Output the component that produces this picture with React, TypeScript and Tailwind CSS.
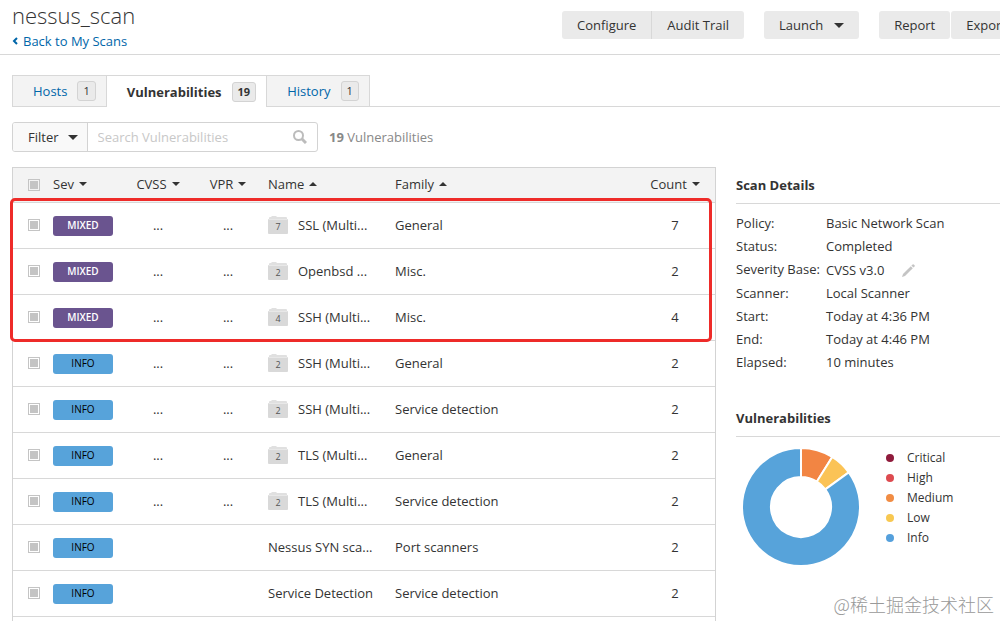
import { clsx } from "clsx";

type Row = {
  sev: "MIXED" | "INFO";
  group?: number;
  name: string;
  family: string;
  count: number;
};

const rows: Row[] = [
  { sev: "MIXED", group: 7, name: "SSL (Multi...", family: "General", count: 7 },
  { sev: "MIXED", group: 2, name: "Openbsd ...", family: "Misc.", count: 2 },
  { sev: "MIXED", group: 4, name: "SSH (Multi...", family: "Misc.", count: 4 },
  { sev: "INFO", group: 2, name: "SSH (Multi...", family: "General", count: 2 },
  { sev: "INFO", group: 2, name: "SSH (Multi...", family: "Service detection", count: 2 },
  { sev: "INFO", group: 2, name: "TLS (Multi...", family: "General", count: 2 },
  { sev: "INFO", group: 2, name: "TLS (Multi...", family: "Service detection", count: 2 },
  { sev: "INFO", name: "Nessus SYN sca...", family: "Port scanners", count: 2 },
  { sev: "INFO", name: "Service Detection", family: "Service detection", count: 2 },
];

const tabs = [
  { label: "Hosts", count: 1 },
  { label: "Vulnerabilities", count: 19, active: true },
  { label: "History", count: 1 },
];

const details = [
  { label: "Policy:", value: "Basic Network Scan" },
  { label: "Status:", value: "Completed" },
  { label: "Severity Base:", value: "CVSS v3.0", editable: true },
  { label: "Scanner:", value: "Local Scanner" },
  { label: "Start:", value: "Today at 4:36 PM" },
  { label: "End:", value: "Today at 4:46 PM" },
  { label: "Elapsed:", value: "10 minutes" },
];

const legend = [
  { label: "Critical", color: "bg-[#8f1b3c]" },
  { label: "High", color: "bg-[#dd4b50]" },
  { label: "Medium", color: "bg-[#f18c43]" },
  { label: "Low", color: "bg-[#f8c851]" },
  { label: "Info", color: "bg-[#55a0dc]" },
];

const slices = [
  { from: 0, to: 32, color: "#f28543" },
  { from: 32, to: 54, color: "#fbc356" },
  { from: 54, to: 360, color: "#57a3da" },
];

const Caret = ({ up = false }: { up?: boolean }) => (
  <svg width="8" height="4" viewBox="0 0 8 4" className="shrink-0" aria-hidden="true">
    <path d={up ? "M0 4L4 0L8 4Z" : "M0 0H8L4 4Z"} fill="#333" />
  </svg>
);

const BigCaret = () => (
  <svg width="10" height="5" viewBox="0 0 10 5" className="shrink-0" aria-hidden="true">
    <path d="M0 0H10L5 5Z" fill="#333" />
  </svg>
);

const Folder = ({ count }: { count: number }) => (
  <span className="relative flex h-[18px] w-5 shrink-0 items-center justify-center">
    <svg width="20" height="18" viewBox="0 0 20 18" className="absolute inset-0" aria-hidden="true">
      <path d="M1 4V2Q1 1 2 1H3L4 0H8L9 1H18Q19 1 19 2V4Z" fill="#e0e0e0" />
      <path d="M0 4Q0 3 1 3H19Q20 3 20 4V17Q20 18 19 18H1Q0 18 0 17Z" fill="#d9d9d9" />
      <path d="M1 3.5H19" stroke="#e8e8e8" />
    </svg>
    <span className="relative pt-1 text-[9px] leading-3 text-[#555]">{count}</span>
  </span>
);

const Checkbox = ({ label }: { label: string }) => (
  <input
    type="checkbox"
    aria-label={label}
    className="block size-3 appearance-none border border-[#c4c4c4] bg-[#c4c4c4] bg-clip-content p-px"
  />
);

const point = (angle: number, radius: number) => {
  const a = (angle * Math.PI) / 180;
  return `${60 + radius * Math.sin(a)} ${60 - radius * Math.cos(a)}`;
};

const Donut = () => (
  <svg width="120" height="120" viewBox="0 0 120 120" role="img" aria-label="Vulnerabilities by severity">
    {slices.map(({ from, to, color }) => {
      const large = to - from > 180 ? 1 : 0;
      return (
        <path
          key={color}
          d={`M${point(from, 59)}A59 59 0 ${large} 1 ${point(to, 59)}L${point(to, 30)}A30 30 0 ${large} 0 ${point(from, 30)}Z`}
          fill={color}
          stroke="#fff"
          strokeWidth="2"
        />
      );
    })}
  </svg>
);

const Header = () => (
  <header className="flex h-[55px] shrink-0 justify-between border-b border-[#d8d8d8] pl-3">
    <div>
      <h1 className="text-[22px] leading-[30px] font-light">nessus_scan</h1>
      <a href="#scans" className="flex items-center gap-1 leading-[22px] text-[#0066a9]">
        <svg width="7" height="8" viewBox="0 0 7 8" fill="none" stroke="currentColor" strokeWidth="2" aria-hidden="true">
          <path d="M5 1L2 4L5 7" />
        </svg>
        Back to My Scans
      </a>
    </div>
    <div className="-mr-[21px] flex shrink-0 gap-5 pt-[11px]">
      <div className="flex h-7">
        <button className="rounded-l-[3px] border-r border-[#d8d8d8] bg-[#eaeaea] px-[15px]">Configure</button>
        <button className="rounded-r-[3px] bg-[#eaeaea] px-[15px]">Audit Trail</button>
      </div>
      <button className="flex h-7 items-center gap-[11px] rounded-[3px] bg-[#eaeaea] px-[15px]">
        Launch
        <BigCaret />
      </button>
      <div className="flex h-7 gap-px">
        <button className="rounded-[3px] bg-[#eaeaea] px-[15px]">Report</button>
        <button className="rounded-[3px] bg-[#eaeaea] px-[15px]">Export</button>
      </div>
    </div>
  </header>
);

const Tabs = () => (
  <div role="tablist" className="mt-5 ml-3 flex h-8 shrink-0">
    {tabs.map(({ label, count, active }) => (
      <button
        key={label}
        role="tab"
        aria-selected={!!active}
        className={clsx(
          "flex items-center gap-[10px] border-t border-[#d8d8d8] pr-[10px] pl-5",
          active ? "font-bold" : "border-x border-b bg-[#f3f3f3] text-[#0066a9]"
        )}
      >
        {label}
        <span className="rounded-[3px] border border-[#d3d3d3] bg-[#eaeaea] px-[5px] text-[11px] leading-[18px] text-[#333]">
          {count}
        </span>
      </button>
    ))}
    <div className="flex-1 border-b border-[#d8d8d8]" />
  </div>
);

const Toolbar = () => (
  <div className="mt-[15px] ml-3 flex h-[30px] shrink-0 items-center">
    <div className="flex h-full w-[306px] overflow-hidden rounded-[3px] border border-[#d3d3d3]">
      <button className="flex items-center gap-[9px] border-r border-[#d3d3d3] bg-[#f9f9f9] pr-[9px] pl-[15px]">
        Filter
        <BigCaret />
      </button>
      <input
        type="search"
        aria-label="Search Vulnerabilities"
        placeholder="Search Vulnerabilities"
        className="min-w-0 flex-1 px-[10px] outline-none placeholder:text-[#c8c8c8]"
      />
      <button aria-label="Search" className="pr-[10px]">
        <svg width="14" height="14" viewBox="0 0 14 14" fill="none" stroke="#bcbcbc" strokeWidth="2" aria-hidden="true">
          <circle cx="5.5" cy="5.5" r="4.5" />
          <path d="M9 9L13 13" strokeWidth="3" />
        </svg>
      </button>
    </div>
    <p className="ml-[11px] text-[#888]">
      <b>19</b> Vulnerabilities
    </p>
  </div>
);

const VulnTable = () => (
  <div className="relative min-w-0 flex-1 border-x border-t border-[#d3d3d3]">
    <table className="w-full table-fixed border-collapse">
      <colgroup>
        <col className="w-[35px]" />
        <col className="w-[75px]" />
        <col className="w-[70px]" />
        <col className="w-[70px]" />
        <col className="w-[127px]" />
        <col />
        <col className="w-20" />
      </colgroup>
      <thead>
        <tr className="h-[34px] border-b border-[#d8d8d8] bg-[#f3f3f3]">
          <th className="pl-[15px]">
            <Checkbox label="Select all" />
          </th>
          <th className="px-[5px] pb-[2px] font-normal">
            <span className="flex items-center gap-[5px]">Sev <Caret /></span>
          </th>
          <th className="pb-[2px] font-normal">
            <span className="flex items-center justify-center gap-[5px]">CVSS <Caret /></span>
          </th>
          <th className="pb-[2px] font-normal">
            <span className="flex items-center justify-center gap-[5px]">VPR <Caret /></span>
          </th>
          <th className="px-[5px] pb-[2px] font-normal">
            <span className="flex items-center gap-[5px]">Name <Caret up /></span>
          </th>
          <th className="px-[5px] pb-[2px] font-normal">
            <span className="flex items-center gap-[5px]">Family <Caret up /></span>
          </th>
          <th className="pb-[2px] font-normal">
            <span className="flex items-center justify-center gap-[5px]">Count <Caret /></span>
          </th>
        </tr>
      </thead>
      <tbody>
        {rows.map(({ sev, group, name, family, count }, i) => (
          <tr key={i} className="h-[46px] border-b border-[#d8d8d8]">
            <td className="pl-[15px]">
              <Checkbox label={`Select ${name}`} />
            </td>
            <td className="px-[5px] pt-[2px]">
              <span
                className={clsx(
                  "block h-5 w-[60px] rounded-[3px] text-center text-[10px] leading-[18px]",
                  sev === "MIXED" ? "bg-[#6a548f] font-semibold text-white" : "bg-[#57a3da] font-medium text-black"
                )}
              >
                {sev}
              </span>
            </td>
            <td className="text-center">{group && "..."}</td>
            <td className="text-center">{group && "..."}</td>
            <td className="px-[5px]">
              <span className="flex items-center gap-[10px] whitespace-nowrap">
                {group && <Folder count={group} />}
                {name}
              </span>
            </td>
            <td className="px-[5px]">{family}</td>
            <td className="text-center">{count}</td>
          </tr>
        ))}
      </tbody>
    </table>
    {/* highlight around the mixed severity rows */}
    <div className="pointer-events-none absolute top-[30px] right-[3px] -left-[3px] h-[144px] rounded-[5px] border-[3px] border-[#ee2b29]" />
  </div>
);

const Sidebar = () => (
  <aside className="w-[264px] shrink-0">
    <h2 className="border-b border-[#d8d8d8] leading-9 font-bold">Scan Details</h2>
    <dl className="mt-2 grid grid-cols-[90px_1fr] leading-[23px]">
      {details.map(({ label, value, editable }) => (
        <div key={label} className="contents">
          <dt className="whitespace-nowrap">{label}</dt>
          <dd className={clsx("flex items-center gap-[18px]", editable && "leading-6")}>
            {value}
            {editable && (
              <button aria-label="Edit severity base">
                <svg width="13" height="13" viewBox="0 0 13 13" fill="#c4c4c4" aria-hidden="true">
                  <path d="M0 13L1 10L8.8 2.2L10.8 4.2L3 12Z" />
                  <path d="M9.4 1.6L10.6 0.4Q11.2 0 11.7 0.4L12.6 1.3Q13 1.8 12.6 2.4L11.4 3.6Z" />
                </svg>
              </button>
            )}
          </dd>
        </div>
      ))}
    </dl>
    <h2 className="mt-[26px] border-b border-[#d8d8d8] leading-9 font-bold">Vulnerabilities</h2>
    <div className="flex gap-[25px] pt-[10px] pl-[5px]">
      <Donut />
      <ul className="pt-px text-xs leading-5">
        {legend.map(({ label, color }) => (
          <li key={label} className="flex items-center gap-[13px]">
            <span className={clsx("size-2 rounded-full", color)} />
            {label}
          </li>
        ))}
      </ul>
    </div>
  </aside>
);

const App = () => {
  return (
    <div className="relative flex h-screen flex-col overflow-hidden bg-white font-['Open_Sans','Noto_Sans',sans-serif] text-[13px] leading-5 text-[#333]">
      <Header />
      <Tabs />
      <Toolbar />
      <main className="mt-[15px] ml-3 flex min-h-0 flex-1 gap-5">
        <VulnTable />
        <Sidebar />
      </main>
      <p className="absolute right-[6px] bottom-1 font-['Noto_Sans_CJK_SC',sans-serif] text-lg leading-[26px] font-light text-[#999]">
        @稀土掘金技术社区
      </p>
    </div>
  );
};

export default App;
